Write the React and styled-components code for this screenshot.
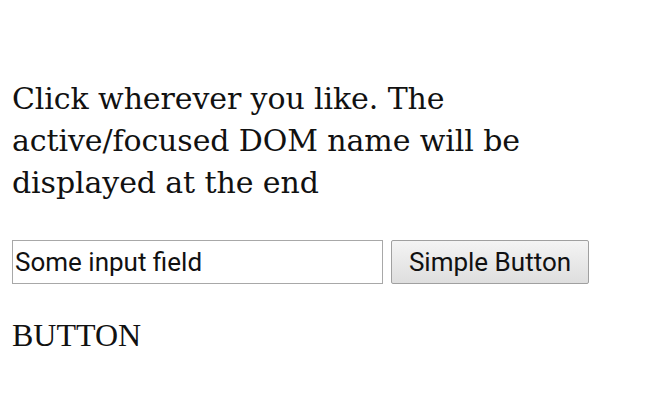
import React, { useState } from "react";
import styled, { createGlobalStyle } from "styled-components";

const GlobalStyle = createGlobalStyle`
  html, body {
    margin: 0;
    background: #ffffff;
  }
`;

const Page = styled.div`
  padding: 78px 12px 0 12px;
  font-family: "DejaVu Serif", serif;
  color: #111111;
`;

const Intro = styled.p`
  margin: 0;
  width: 560px;
  font-size: 30px;
  line-height: 42px;
  letter-spacing: -0.1px;
`;

const Row = styled.div`
  display: flex;
  gap: 8px;
  margin-top: 36px;
`;

const TextField = styled.input`
  box-sizing: border-box;
  width: 371px;
  height: 44px;
  padding: 0 2px;
  border: 1px solid #a8a8a8;
  font-family: Roboto, "Noto Sans", sans-serif;
  font-size: 26px;
  color: #111111;
  outline: none;
`;

const PlainButton = styled.button`
  box-sizing: border-box;
  width: 198px;
  height: 44px;
  padding: 0 8px;
  border: 1px solid #a0a0a0;
  border-radius: 2px;
  background: linear-gradient(#f4f4f4, #dedede);
  font-family: Roboto, "Noto Sans", sans-serif;
  font-size: 26px;
  color: #111111;
`;

const Result = styled.div`
  margin-top: 31px;
  font-family: "Liberation Serif", serif;
  font-size: 32px;
  line-height: 40px;
`;

export default function App() {
  const [name, setName] = useState("BUTTON");

  const track = () => {
    setTimeout(() => {
      const el = document.activeElement;
      if (el) setName(el.nodeName);
    }, 0);
  };

  return (
    <>
      <GlobalStyle />
      <Page onMouseDown={track}>
        <Intro>
          Click wherever you like. The active/focused DOM name will be
          displayed at the end
        </Intro>
        <Row>
          <TextField defaultValue="Some input field" />
          <PlainButton>Simple Button</PlainButton>
        </Row>
        <Result>{name}</Result>
      </Page>
    </>
  );
}
